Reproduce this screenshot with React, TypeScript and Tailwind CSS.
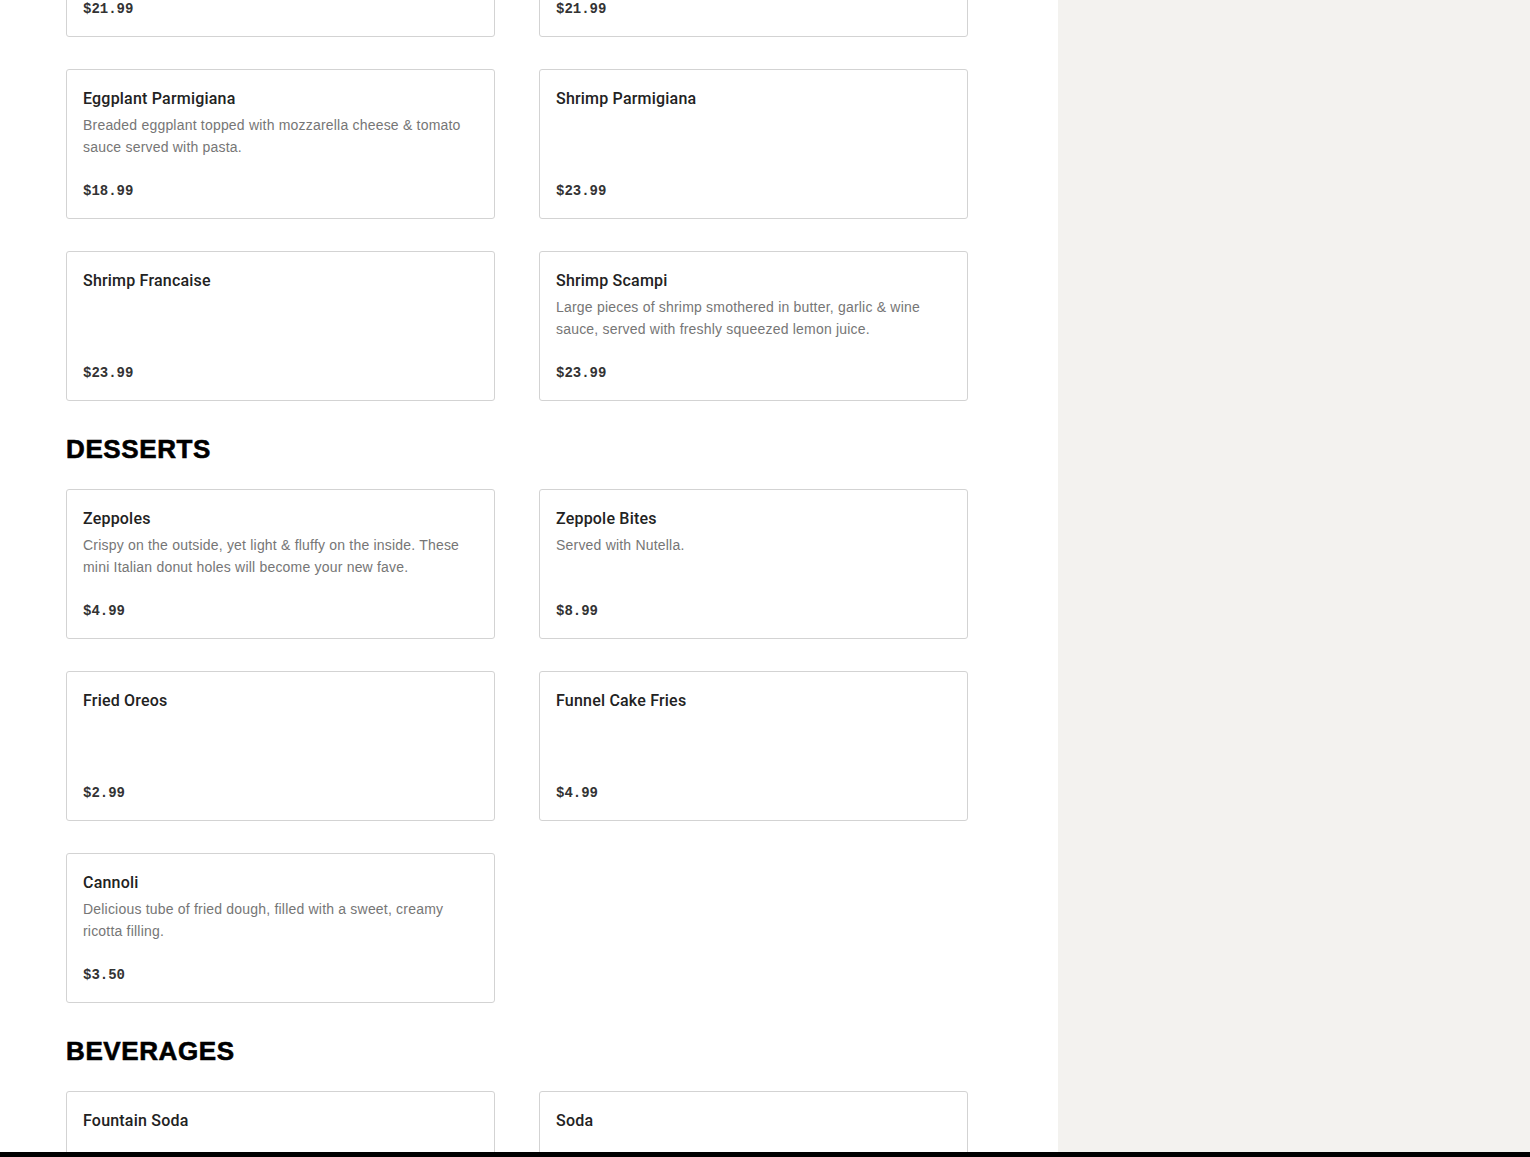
import React from 'react'

type Item = { name: string; description?: string; price: string }

const sections: { title?: string; items: Item[] }[] = [
  {
    items: [
      { name: 'Chicken Francaise', price: '$21.99' },
      { name: 'Chicken Marsala', price: '$21.99' },
      {
        name: 'Eggplant Parmigiana',
        description: 'Breaded eggplant topped with mozzarella cheese & tomato sauce served with pasta.',
        price: '$18.99',
      },
      { name: 'Shrimp Parmigiana', price: '$23.99' },
      { name: 'Shrimp Francaise', price: '$23.99' },
      {
        name: 'Shrimp Scampi',
        description: 'Large pieces of shrimp smothered in butter, garlic & wine sauce, served with freshly squeezed lemon juice.',
        price: '$23.99',
      },
    ],
  },
  {
    title: 'DESSERTS',
    items: [
      {
        name: 'Zeppoles',
        description: 'Crispy on the outside, yet light & fluffy on the inside. These mini Italian donut holes will become your new fave.',
        price: '$4.99',
      },
      { name: 'Zeppole Bites', description: 'Served with Nutella.', price: '$8.99' },
      { name: 'Fried Oreos', price: '$2.99' },
      { name: 'Funnel Cake Fries', price: '$4.99' },
      {
        name: 'Cannoli',
        description: 'Delicious tube of fried dough, filled with a sweet, creamy ricotta filling.',
        price: '$3.50',
      },
    ],
  },
  {
    title: 'BEVERAGES',
    items: [
      { name: 'Fountain Soda', price: '$2.99' },
      { name: 'Soda', price: '$2.50' },
    ],
  },
]

const MenuCard = ({ name, description, price }: Item) => (
  <div className="h-[150px] border border-[#d3d3d3] rounded-[3px] bg-white px-4 pt-[17px] pb-[17px] flex flex-col">
    <div className="text-[16px] leading-6 font-medium tracking-[0.2px] text-[#222] font-['Roboto',Arial,sans-serif]">
      {name}
    </div>
    {description && (
      <div className="mt-[3px] text-[14px] leading-[22px] tracking-[0.2px] text-[#767676]">{description}</div>
    )}
    <div className="mt-auto text-[14px] leading-5 font-bold text-[#333] font-['Liberation_Mono',monospace]">
      {price}
    </div>
  </div>
)

export default function App() {
  return (
    <div className="flex w-full min-h-screen bg-white font-['Liberation_Sans',Arial,sans-serif] overflow-hidden h-[1157px]">
      <main className="w-[1058px] shrink-0 pl-[66px] pr-[90px] mt-[-113px]">
        {sections.map((section, i) => (
          <section key={i}>
            {section.title && (
              <h2 className="mt-8 mb-6 text-[26px] leading-8 font-bold tracking-[0.6px] text-black [-webkit-text-stroke:0.6px_black]">
                {section.title}
              </h2>
            )}
            <div className="grid grid-cols-2 gap-x-[44px] gap-y-8">
              {section.items.map((item) => (
                <MenuCard key={item.name} {...item} />
              ))}
            </div>
          </section>
        ))}
      </main>
      <aside className="flex-1 bg-[#f3f2ef]" />
      <div className="fixed left-0 right-0 bottom-0 h-[5px] bg-black" />
    </div>
  )
}
